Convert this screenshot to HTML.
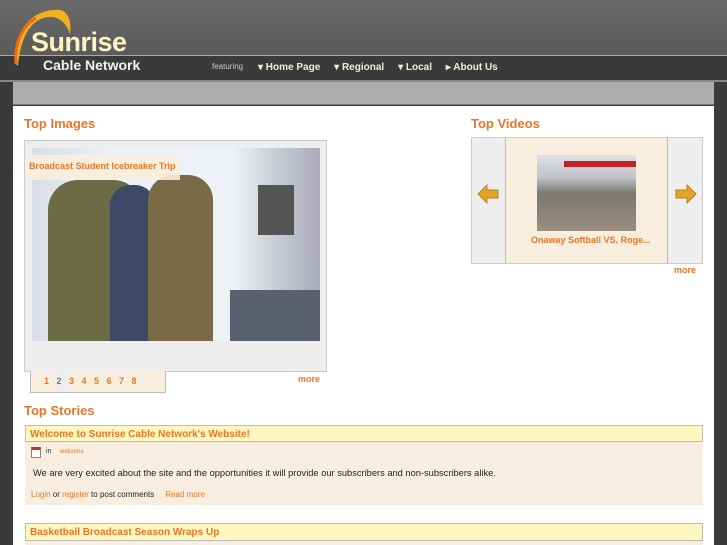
<!DOCTYPE html>
<html><head><style>
*{margin:0;padding:0;box-sizing:border-box}
body{width:727px;height:545px;overflow:hidden;background:#3a3a3a;font-family:"Liberation Sans",sans-serif;position:relative}
.a{position:absolute}
.or{color:#e8762a;font-weight:bold}
</style></head><body>
<div class="a" style="left:0;top:0;width:727px;height:56px;background:linear-gradient(#6a6a6a,#5a5a5a)"></div>
<div class="a" style="left:0;top:55px;width:727px;height:1px;background:#aaa"></div>
<div class="a" style="left:0;top:56px;width:727px;height:24px;background:#3a3a3a"></div>
<div class="a" style="left:0;top:80px;width:727px;height:2px;background:#888"></div>
<svg class="a" style="left:10px;top:4px" width="80" height="66"><path d="M6 60 C2 30 20 4 50 6 C58 7 62 18 60 30 C56 18 48 12 38 13 C20 15 10 35 8 62Z" fill="#f2b01a"/><path d="M6 60 C4 40 12 22 26 14" stroke="#e86a1a" stroke-width="3" fill="none"/></svg>
<div class="a" style="left:31px;top:27px;font-size:27px;font-weight:bold;color:#fbf4c0;letter-spacing:-0.5px">Sunrise</div>
<div class="a" style="left:43px;top:57px;font-size:14px;font-weight:bold;color:#f2f2e6">Cable Network</div>
<div class="a" style="left:212px;top:62px;font-size:8px;color:#ccc">featuring</div>
<div class="a" style="left:258px;top:62px;font-size:10px;font-weight:bold;color:#f5efc8;white-space:nowrap">▾ Home Page &nbsp; &nbsp; ▾ Regional &nbsp; &nbsp; ▾ Local &nbsp; &nbsp; ▸ About Us</div>
<div class="a" style="left:13px;top:82px;width:701px;height:23px;background:#adadad;border-bottom:1px solid #777"></div>
<div class="a" style="left:13px;top:106px;width:701px;height:439px;background:#fff"></div>
<div class="a or" style="left:24px;top:116px;font-size:13px">Top Images</div>
<div class="a" style="left:24px;top:140px;width:303px;height:232px;background:#eee;border:1px solid #ccc"></div>
<div class="a" style="left:32px;top:148px;width:288px;height:193px;background:linear-gradient(90deg,#d9dfe6 0%,#eef1f5 30%,#eef1f5 70%,#c8ccd2 85%,#aab 100%)"></div>
<div class="a" style="left:48px;top:180px;width:95px;height:161px;background:#6b6b45;border-radius:30px 30px 0 0"></div>
<div class="a" style="left:110px;top:185px;width:45px;height:156px;background:#3d4a66;border-radius:20px 20px 0 0"></div>
<div class="a" style="left:148px;top:175px;width:65px;height:166px;background:#7a6a48;border-radius:25px 25px 0 0"></div>
<div class="a" style="left:258px;top:185px;width:36px;height:50px;background:#555"></div>
<div class="a" style="left:230px;top:290px;width:90px;height:51px;background:#5a6070"></div>
<div class="a" style="left:25px;top:155px;width:155px;height:25px;background:rgba(248,238,220,.9)"></div>
<div class="a or" style="left:29px;top:161px;font-size:9px">Broadcast Student Icebreaker Trip</div>
<div class="a" style="left:30px;top:371px;width:136px;height:22px;background:#f7eedd;border:1px solid #bbb;border-top:none"></div>
<div class="a" style="left:55px;top:371px;width:14px;height:21px;background:#eee"></div>
<div class="a or" style="left:44px;top:376px;font-size:9px;word-spacing:5px">1 <span style="color:#777">2</span> 3 4 5 6 7 8</div>
<div class="a or" style="left:298px;top:374px;font-size:9px">more</div>
<div class="a or" style="left:471px;top:116px;font-size:13px">Top Videos</div>
<div class="a" style="left:471px;top:137px;width:232px;height:127px;background:#eee;border:1px solid #ccc"></div>
<div class="a" style="left:505px;top:138px;width:163px;height:125px;background:#f7eedd;border-left:1px solid #bbb;border-right:1px solid #bbb"></div>
<div class="a" style="left:537px;top:155px;width:99px;height:76px;background:linear-gradient(#dfe3e8 0%,#c0c4c8 30%,#7a7870 50%,#9a8e80 100%)"></div>
<div class="a" style="left:564px;top:161px;width:72px;height:6px;background:#c8202a"></div>
<svg class="a" style="left:477px;top:184px" width="22" height="20"><path d="M1 10 L10 1 L10 6 L21 6 L21 14 L10 14 L10 19Z" fill="#e2a52a" stroke="#b88020"/></svg>
<svg class="a" style="left:675px;top:184px" width="22" height="20"><path d="M21 10 L12 1 L12 6 L1 6 L1 14 L12 14 L12 19Z" fill="#e2a52a" stroke="#b88020"/></svg>
<div class="a or" style="left:531px;top:235px;font-size:9px">Onaway Softball VS. Roge...</div>
<div class="a or" style="left:674px;top:265px;font-size:9px">more</div>
<div class="a or" style="left:24px;top:403px;font-size:13px">Top Stories</div>
<div class="a" style="left:25px;top:425px;width:678px;height:17px;background:#fff7bf;border:1px solid #bbb"></div>
<div class="a or" style="left:30px;top:429px;font-size:10px">Welcome to Sunrise Cable Network's Website!</div>
<div class="a" style="left:25px;top:442px;width:678px;height:63px;background:#f7eedf"></div>
<div class="a" style="left:31px;top:447px;width:10px;height:11px;background:#fff;border:1px solid #888;border-top:3px solid #b33"></div>
<div class="a" style="left:46px;top:448px;font-size:7px;color:#333">in</div>
<div class="a or" style="left:60px;top:449px;font-size:6px;font-weight:normal">welcome</div>
<div class="a" style="left:33px;top:468px;font-size:9.3px;color:#222">We are very excited about the site and the opportunities it will provide our subscribers and non-subscribers alike.</div>
<div class="a" style="left:31px;top:490px;font-size:8px;color:#222"><span style="color:#e8762a">Login</span> or <span style="color:#e8762a">register</span> to post comments &nbsp; &nbsp; <span style="color:#e8762a">Read more</span></div>
<div class="a" style="left:25px;top:523px;width:678px;height:18px;background:#fff7bf;border:1px solid #bbb"></div>
<div class="a or" style="left:30px;top:527px;font-size:10px">Basketball Broadcast Season Wraps Up</div>
<div class="a" style="left:25px;top:541px;width:678px;height:4px;background:#f7eedf"></div>
</body></html>
